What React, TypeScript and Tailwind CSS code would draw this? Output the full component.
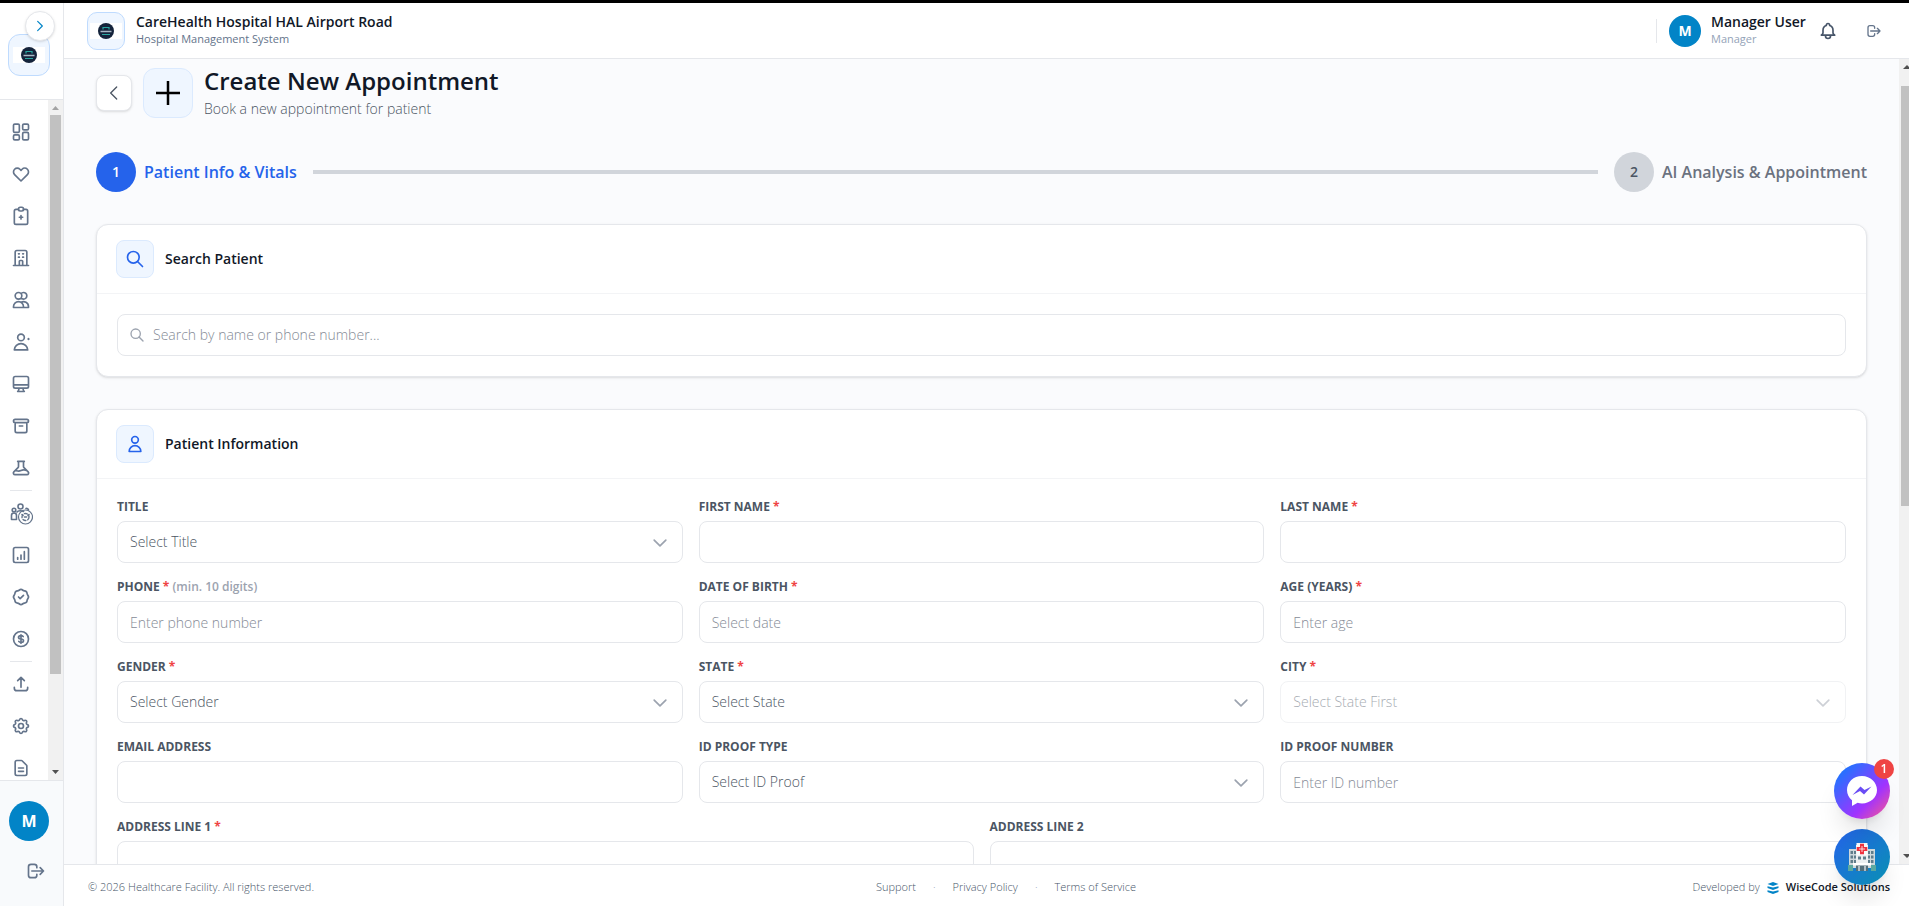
import React from 'react';
import {
  HiOutlineArchive,
  HiOutlineBadgeCheck,
  HiOutlineBeaker,
  HiOutlineBell,
  HiOutlineCog,
  HiOutlineCurrencyDollar,
  HiOutlineDesktopComputer,
  HiOutlineDocumentText,
  HiOutlineHeart,
  HiOutlineLogout,
  HiOutlineOfficeBuilding,
  HiOutlineUpload,
  HiOutlineUser,
  HiOutlineUsers,
} from 'react-icons/hi';

interface IconProps {
  className?: string;
  children?: React.ReactNode;
}

function LineIcon({ className = 'size-5', children }: IconProps) {
  return (
    <svg
      viewBox="0 0 24 24"
      className={className}
      fill="none"
      stroke="currentColor"
      strokeWidth={2}
      strokeLinecap="round"
      strokeLinejoin="round"
      aria-hidden="true"
    >
      {children}
    </svg>
  );
}

const DashboardIcon = () => (
  <LineIcon>
    <rect x="3" y="2.500" width="7" height="10" rx="1.5" />
    <rect x="14" y="2.500" width="7" height="7" rx="1.5" />
    <rect x="3" y="15.500" width="7" height="6" rx="1.5" />
    <rect x="14" y="12.500" width="7" height="9" rx="1.5" />
  </LineIcon>
);

const ClipboardPlusIcon = () => (
  <LineIcon>
    <path d="M9 4H6a2 2 0 00-2 2v14a2 2 0 002 2h12a2 2 0 002-2V6a2 2 0 00-2-2h-3" />
    <rect x="9" y="1.500" width="6" height="4.500" rx="2" />
    <path d="M12 11.500v4M10 13.500h4" />
  </LineIcon>
);

const UserPlusIcon = () => (
  <LineIcon>
    <circle cx="12" cy="6.500" r="4" />
    <path d="M12 14a8 8 0 00-8 7.500h16a8 8 0 00-8-7.500z" />
    <path d="M21 8v1M20.500 8.500h1" />
  </LineIcon>
);

const StaffIcon = () => (
  <LineIcon className="size-6">
    <g strokeWidth={1.6}>
      <circle cx="11.500" cy="5.500" r="2.500" />
      <circle cx="5" cy="9" r="1.800" />
      <path d="M2.500 18.500v-4a2.500 2.500 0 015 0v4zM8 11c1-1.500 5-1.500 6.500-.5M17 7.500a2 2 0 012.500 1.500" />
      <circle cx="16.500" cy="16" r="7" strokeWidth={1.2} />
      <circle cx="16.500" cy="16" r="3.500" strokeWidth={1.4} strokeDasharray="3 2" />
      <path d="M15.500 16h2M13 13.500l1 1M20 13.500l-1 1" />
    </g>
  </LineIcon>
);

const ReportIcon = () => (
  <LineIcon>
    <rect x="3" y="3" width="18" height="18" rx="2" />
    <path d="M8 17v-2M12 17v-5M16 17V8" />
  </LineIcon>
);

const SearchIcon = ({ className }: IconProps) => (
  <LineIcon className={className}>
    <circle cx="10" cy="10" r="7" />
    <path d="M21 21l-6-6" />
  </LineIcon>
);

const navGroups = [
  [
    { name: 'Dashboard', icon: <DashboardIcon /> },
    { name: 'Vitals', icon: <HiOutlineHeart className="size-5" /> },
    { name: 'Appointments', icon: <ClipboardPlusIcon /> },
    { name: 'Departments', icon: <HiOutlineOfficeBuilding className="size-5" /> },
    { name: 'Patients', icon: <HiOutlineUsers className="size-5" /> },
    { name: 'Doctors', icon: <UserPlusIcon /> },
    { name: 'Front desk', icon: <HiOutlineDesktopComputer className="size-5" /> },
    { name: 'Inventory', icon: <HiOutlineArchive className="size-5" /> },
    { name: 'Laboratory', icon: <HiOutlineBeaker className="size-5" /> },
  ],
  [
    { name: 'Staff', icon: <StaffIcon /> },
    { name: 'Reports', icon: <ReportIcon /> },
    { name: 'Approvals', icon: <HiOutlineBadgeCheck className="size-5" /> },
    { name: 'Billing', icon: <HiOutlineCurrencyDollar className="size-5" /> },
  ],
  [
    { name: 'Upload', icon: <HiOutlineUpload className="size-5" /> },
    { name: 'Settings', icon: <HiOutlineCog className="size-5" /> },
    { name: 'Documents', icon: <HiOutlineDocumentText className="size-5" /> },
  ],
];

function HospitalLogo({ className }: IconProps) {
  return (
    <span className={`flex items-center justify-center border border-[#bfdbfe] bg-[#eff6ff] ${className}`}>
      <svg viewBox="0 0 32 16" className="w-8" aria-hidden="true">
        <rect width="32" height="16" fill="#fff" />
        <circle cx="16" cy="8" r="8" fill="#14233b" />
        <path d="M13 6.500V4.500h6v2M12 11.500h8" stroke="#2aa5a0" fill="none" strokeWidth="1.200" />
        <path d="M10.500 8.500h11" stroke="#a9b8c6" strokeWidth="1.500" />
      </svg>
    </span>
  );
}

function Sidebar() {
  return (
    <aside className="flex w-16 shrink-0 flex-col border-r border-[#e5e7eb] bg-white">
      <div className="relative h-[97px] shrink-0 border-b border-[#e5e7eb] px-2 pt-[31px]">
        <HospitalLogo className="size-[42px] rounded-xl" />
        <button
          type="button"
          aria-label="Expand sidebar"
          className="absolute top-2 right-2 flex size-[30px] items-center justify-center rounded-full border border-[#e5e7eb] bg-white text-[#0284c7] shadow-sm"
        >
          <LineIcon className="size-3.5">
            <path d="M8 4l8 8-8 8" />
          </LineIcon>
        </button>
      </div>

      <div className="flex min-h-0 flex-1">
        <nav className="flex flex-1 flex-col overflow-hidden pt-[11px] pr-1.5 text-[#64748b]">
          {navGroups.map((group, index) => (
            <React.Fragment key={index}>
              {index > 0 && <div className="mx-auto my-px h-px w-[22px] shrink-0 bg-[#e5e7eb]" />}
              {group.map((item) => (
                <a
                  key={item.name}
                  href="#"
                  aria-label={item.name}
                  className="flex h-[42px] shrink-0 items-center justify-center"
                >
                  {item.icon}
                </a>
              ))}
            </React.Fragment>
          ))}
        </nav>
        <div className="flex w-[15px] flex-col items-center bg-[#f1f1f1]">
          <svg viewBox="0 0 15 15" className="size-[15px] shrink-0 text-[#a3a3a3]">
            <path d="M4 10l3.500-4 3.500 4z" fill="currentColor" />
          </svg>
          <div className="flex w-full flex-1 flex-col items-center">
            <div className="h-[86%] w-[11px] bg-[#c1c1c1]" />
          </div>
          <svg viewBox="0 0 15 15" className="size-[15px] shrink-0 text-[#505050]">
            <path d="M4 5l3.500 4L11 5z" fill="currentColor" />
          </svg>
        </div>
      </div>

      <div className="flex h-[126px] shrink-0 flex-col border-t border-[#e5e7eb] bg-[#f8fafc] px-[9px] pt-5">
        <span className="flex size-10 items-center justify-center rounded-full bg-[#0284c7] text-base font-bold text-white">
          M
        </span>
        <button type="button" aria-label="Log out" className="mt-5 ml-[17px] w-5 text-[#64748b]">
          <HiOutlineLogout className="size-5" />
        </button>
      </div>
    </aside>
  );
}

function Header() {
  return (
    <header className="flex h-14 shrink-0 items-center justify-between border-b border-[#e5e7eb] bg-white pr-[27px] pl-[23px]">
      <div className="flex items-center gap-[11px]">
        <HospitalLogo className="size-[38px] rounded-[10px]" />
        <div className="pb-0.5">
          <p className="text-sm leading-[18px] font-semibold text-[#111827]">CareHealth Hospital HAL Airport Road</p>
          <p className="text-[11px] leading-4 text-[#64748b]">Hospital Management System</p>
        </div>
      </div>
      <div className="flex items-center">
        <div className="h-6 w-px bg-[#e5e7eb]" />
        <span className="ml-3 flex size-8 items-center justify-center rounded-full bg-[#0284c7] text-sm font-bold text-white">
          M
        </span>
        <div className="ml-2.5 w-[91px] pb-0.5">
          <p className="text-sm leading-[18px] font-semibold whitespace-nowrap text-[#111827]">Manager User</p>
          <p className="text-[11px] leading-4 text-[#94a3b8]">Manager</p>
        </div>
        <button type="button" aria-label="Notifications" className="ml-4 text-[#475569]">
          <HiOutlineBell className="size-5" />
        </button>
        <button type="button" aria-label="Log out" className="ml-7 text-[#64748b]">
          <HiOutlineLogout className="size-4" />
        </button>
      </div>
    </header>
  );
}

function Stepper() {
  return (
    <div className="mb-8 flex items-center">
      <span className="flex size-10 items-center justify-center rounded-full bg-[#2563eb] text-sm font-semibold text-white">
        1
      </span>
      <span className="ml-2 text-base font-semibold text-[#2563eb]">Patient Info &amp; Vitals</span>
      <div className="mx-4 h-1 flex-1 bg-[#d1d5db]" />
      <span className="flex size-10 items-center justify-center rounded-full bg-[#d1d5db] text-sm font-semibold text-[#4b5563]">
        2
      </span>
      <span className="ml-2 text-base font-semibold text-[#6b7280]">AI Analysis &amp; Appointment</span>
    </div>
  );
}

interface CardProps {
  title: string;
  icon: React.ReactNode;
  children: React.ReactNode;
}

function Card({ title, icon, children }: CardProps) {
  return (
    <section className="mb-8 rounded-xl border border-[#e5e7eb] bg-white shadow-sm">
      <div className="flex items-center gap-[11px] border-b border-[#f3f4f6] px-[19px] py-[15px]">
        <span className="flex size-[38px] items-center justify-center rounded-lg border border-[#dbeafe] bg-[#eff6ff] text-[#2563eb]">
          {icon}
        </span>
        <h2 className="text-sm font-semibold text-[#111827]">{title}</h2>
      </div>
      <div className="p-5">{children}</div>
    </section>
  );
}

interface FieldProps {
  id: string;
  label: string;
  required?: boolean;
  hint?: string;
  placeholder?: string;
  select?: boolean;
  disabled?: boolean;
  className?: string;
}

function Field({ id, label, required, hint, placeholder, select, disabled, className = 'col-span-2' }: FieldProps) {
  return (
    <div className={className}>
      <label htmlFor={id} className="mb-1.5 block text-xs font-bold text-[#4b5563]">
        <span className="uppercase">{label}</span>
        {required && <span className="text-[#ef4444]"> *</span>}
        {hint && <span className="font-semibold text-[#9ca3af]"> {hint}</span>}
      </label>
      {select ? (
        <div className={disabled ? 'relative opacity-50' : 'relative'}>
          <select
            id={id}
            disabled={disabled}
            className="h-[42px] w-full appearance-none rounded-lg border border-[#e5e7eb] bg-white px-3 text-sm font-light text-[#4b5563]"
          >
            <option>{placeholder}</option>
          </select>
          <LineIcon className="pointer-events-none absolute top-3 right-[13px] size-5 text-[#9ca3af]">
            <path d="M5 8.500l7 7 7-7" />
          </LineIcon>
        </div>
      ) : (
        <input
          id={id}
          type="text"
          placeholder={placeholder}
          className="block h-[42px] w-full rounded-lg border border-[#e5e7eb] bg-white px-3 text-sm font-light placeholder:text-[#858b96]"
        />
      )}
    </div>
  );
}

const fields: FieldProps[] = [
  { id: 'title', label: 'Title', placeholder: 'Select Title', select: true },
  { id: 'firstName', label: 'First Name', required: true },
  { id: 'lastName', label: 'Last Name', required: true },
  { id: 'phone', label: 'Phone', required: true, hint: '(min. 10 digits)', placeholder: 'Enter phone number' },
  { id: 'dob', label: 'Date of Birth', required: true, placeholder: 'Select date' },
  { id: 'age', label: 'Age (Years)', required: true, placeholder: 'Enter age' },
  { id: 'gender', label: 'Gender', required: true, placeholder: 'Select Gender', select: true },
  { id: 'state', label: 'State', required: true, placeholder: 'Select State', select: true },
  { id: 'city', label: 'City', required: true, placeholder: 'Select State First', select: true, disabled: true },
  { id: 'email', label: 'Email Address' },
  { id: 'idType', label: 'ID Proof Type', placeholder: 'Select ID Proof', select: true },
  { id: 'idNumber', label: 'ID Proof Number', placeholder: 'Enter ID number' },
  { id: 'address1', label: 'Address Line 1', required: true, className: 'col-span-3' },
  { id: 'address2', label: 'Address Line 2', className: 'col-span-3' },
];

function Footer() {
  return (
    <footer className="grid h-[42px] shrink-0 grid-cols-3 items-center border-t border-[#e5e7eb] bg-white pt-1 pr-[19px] pl-6 text-[11px] font-light text-[#475569]">
      <p>© 2026 Healthcare Facility. All rights reserved.</p>
      <div className="flex items-center justify-center gap-[17px] pl-[34px]">
        <a href="#">Support</a>
        <span className="text-[#94a3b8]">·</span>
        <a href="#">Privacy Policy</a>
        <span className="text-[#94a3b8]">·</span>
        <a href="#">Terms of Service</a>
      </div>
      <div className="flex items-center justify-end gap-[7px]">
        <span>Developed by</span>
        <svg viewBox="0 0 12 12" className="size-3 text-[#0284c7]" fill="currentColor" aria-hidden="true">
          <path d="M6 0l5.500 2L6 4 .5 2zM.5 4.300L6 5.500l5.500-1.200v1.700L6 8 .5 6zM.5 8.300L6 9.500l5.500-1.200V10L6 12 .5 10z" />
        </svg>
        <span className="font-semibold text-[#111827]">WiseCode Solutions</span>
      </div>
    </footer>
  );
}

function ChatButtons() {
  return (
    <div className="fixed right-[19px] bottom-[21px] flex flex-col gap-2.5">
      <button
        type="button"
        aria-label="Open messages"
        className="relative flex size-14 items-center justify-center rounded-full bg-[linear-gradient(135deg,#0084ff,#a033ff_65%,#ff5c87)] shadow-xl"
      >
        <svg viewBox="0 0 32 32" className="size-8" aria-hidden="true">
          <path
            d="M16 1C7.500 1 1 7.200 1 15c0 4.200 1.900 7.800 5 10.300V31l5.600-3.200c1.400.4 2.900.6 4.400.6 8.500 0 15-6 15-13.400S24.500 1 16 1z"
            fill="#fff"
          />
          <path d="M6.500 20l8-8.500 4 3.500 7-3.500-7.500 8-4-3.500z" fill="#6a4df5" />
        </svg>
        <span className="absolute -top-1 -right-1 flex size-5 items-center justify-center rounded-full bg-[#ef4444] text-xs font-semibold text-white">
          1
        </span>
      </button>
      <button
        type="button"
        aria-label="Hospital assistant"
        className="flex size-14 items-center justify-center rounded-full bg-[linear-gradient(135deg,#2563eb,#0891b2)] shadow-xl"
      >
        <svg viewBox="0 0 28 28" className="size-7" aria-hidden="true">
          <path d="M1 6h8v19H1zM19 6h8v19h-8z" fill="#cfd8dc" />
          <path d="M8 2h12v23H8z" fill="#eceff1" />
          <path
            d="M2.500 8H5v3H2.500zM6 8h2v3H6zM2.500 12.500H5v3H2.500zM6 12.500h2v3H6zM2.500 17H5v3H2.500zM6 17h2v3H6zM20 8h2v3h-2zM23 8h2.500v3H23zM20 12.500h2v3h-2zM23 12.500h2.500v3H23zM20 17h2v3h-2zM23 17h2.500v3H23zM10 13.500h3v3h-3zM15 13.500h3v3h-3z"
            fill="#607d8b"
          />
          <path d="M5 20h18v2.500H5z" fill="#fff" />
          <path d="M8 22.500h12V28H8z" fill="#546e7a" />
          <path d="M10 23h2v5h-2zM16 23h2v5h-2z" fill="#b0bec5" />
          <path d="M0 22h5v6H0zM23 22h5v6h-5z" fill="#5aa8a0" />
          <path d="M8.500 0h11v12h-11z" fill="#fafafa" />
          <path d="M12 .8h4v3.200h3.300v4H16v3.300h-4V8H8.700V4H12z" fill="#ef3340" />
          <path d="M14 3v6M11 6h6" stroke="#fff" strokeWidth=".8" />
        </svg>
      </button>
    </div>
  );
}

export default function App() {
  return (
    <div className="flex h-screen flex-col overflow-hidden bg-white font-['Open_Sans','Noto_Sans',sans-serif]">
      <div className="h-[3px] shrink-0 bg-black" />
      <div className="flex min-h-0 flex-1">
        <Sidebar />
        <div className="flex min-w-0 flex-1 flex-col">
          <Header />
          <div className="flex min-h-0 flex-1">
            <main className="min-w-0 flex-1 overflow-hidden bg-[#fafbfd] px-8 pt-1.5">
              <div className="mb-[31px] flex items-center">
                <button
                  type="button"
                  aria-label="Go back"
                  className="flex size-9 items-center justify-center rounded-lg border border-[#e5e7eb] bg-white text-[#4b5563] shadow-sm"
                >
                  <LineIcon className="size-4">
                    <path d="M16 3l-9 9 9 9" />
                  </LineIcon>
                </button>
                <span className="ml-[11px] flex size-[50px] items-center justify-center rounded-xl border border-[#dbeafe] bg-[#eff6ff] text-black">
                  <svg viewBox="0 0 24 24" className="size-6" stroke="currentColor" strokeWidth={2.5} aria-hidden="true">
                    <path d="M12 0v24M0 12h24" />
                  </svg>
                </span>
                <div className="ml-[11px]">
                  <h1 className="text-2xl leading-8 font-semibold text-[#111827]">Create New Appointment</h1>
                  <p className="text-sm leading-6 font-light text-[#4b5563]">Book a new appointment for patient</p>
                </div>
              </div>

              <Stepper />

              <Card title="Search Patient" icon={<SearchIcon className="size-5" />}>
                <div className="flex h-[42px] items-center gap-2 rounded-lg border border-[#e5e7eb] px-[11px] text-[#9ca3af]">
                  <SearchIcon className="size-4" />
                  <input
                    type="search"
                    aria-label="Search patient"
                    placeholder="Search by name or phone number..."
                    className="flex-1 bg-transparent text-sm font-light outline-none placeholder:text-[#858b96]"
                  />
                </div>
              </Card>

              <Card title="Patient Information" icon={<HiOutlineUser className="size-5" />}>
                <div className="grid grid-cols-6 gap-4">
                  {fields.map((field) => (
                    <Field key={field.id} {...field} />
                  ))}
                </div>
              </Card>
            </main>

            <div className="flex w-2.5 shrink-0 flex-col overflow-hidden bg-[#f1f1f1] pl-0.5">
              <svg viewBox="0 0 15 15" className="size-[15px] shrink-0 text-[#505050]">
                <path d="M2 10l4-4 4 4z" fill="currentColor" />
              </svg>
              <div className="flex-1 pt-3">
                <div className="h-[55%] w-full bg-[#c1c1c1]" />
              </div>
              <svg viewBox="0 0 15 15" className="size-[15px] shrink-0 text-[#505050]">
                <path d="M2 5l4 4 4-4z" fill="currentColor" />
              </svg>
            </div>
          </div>
          <Footer />
        </div>
      </div>
      <ChatButtons />
    </div>
  );
}
